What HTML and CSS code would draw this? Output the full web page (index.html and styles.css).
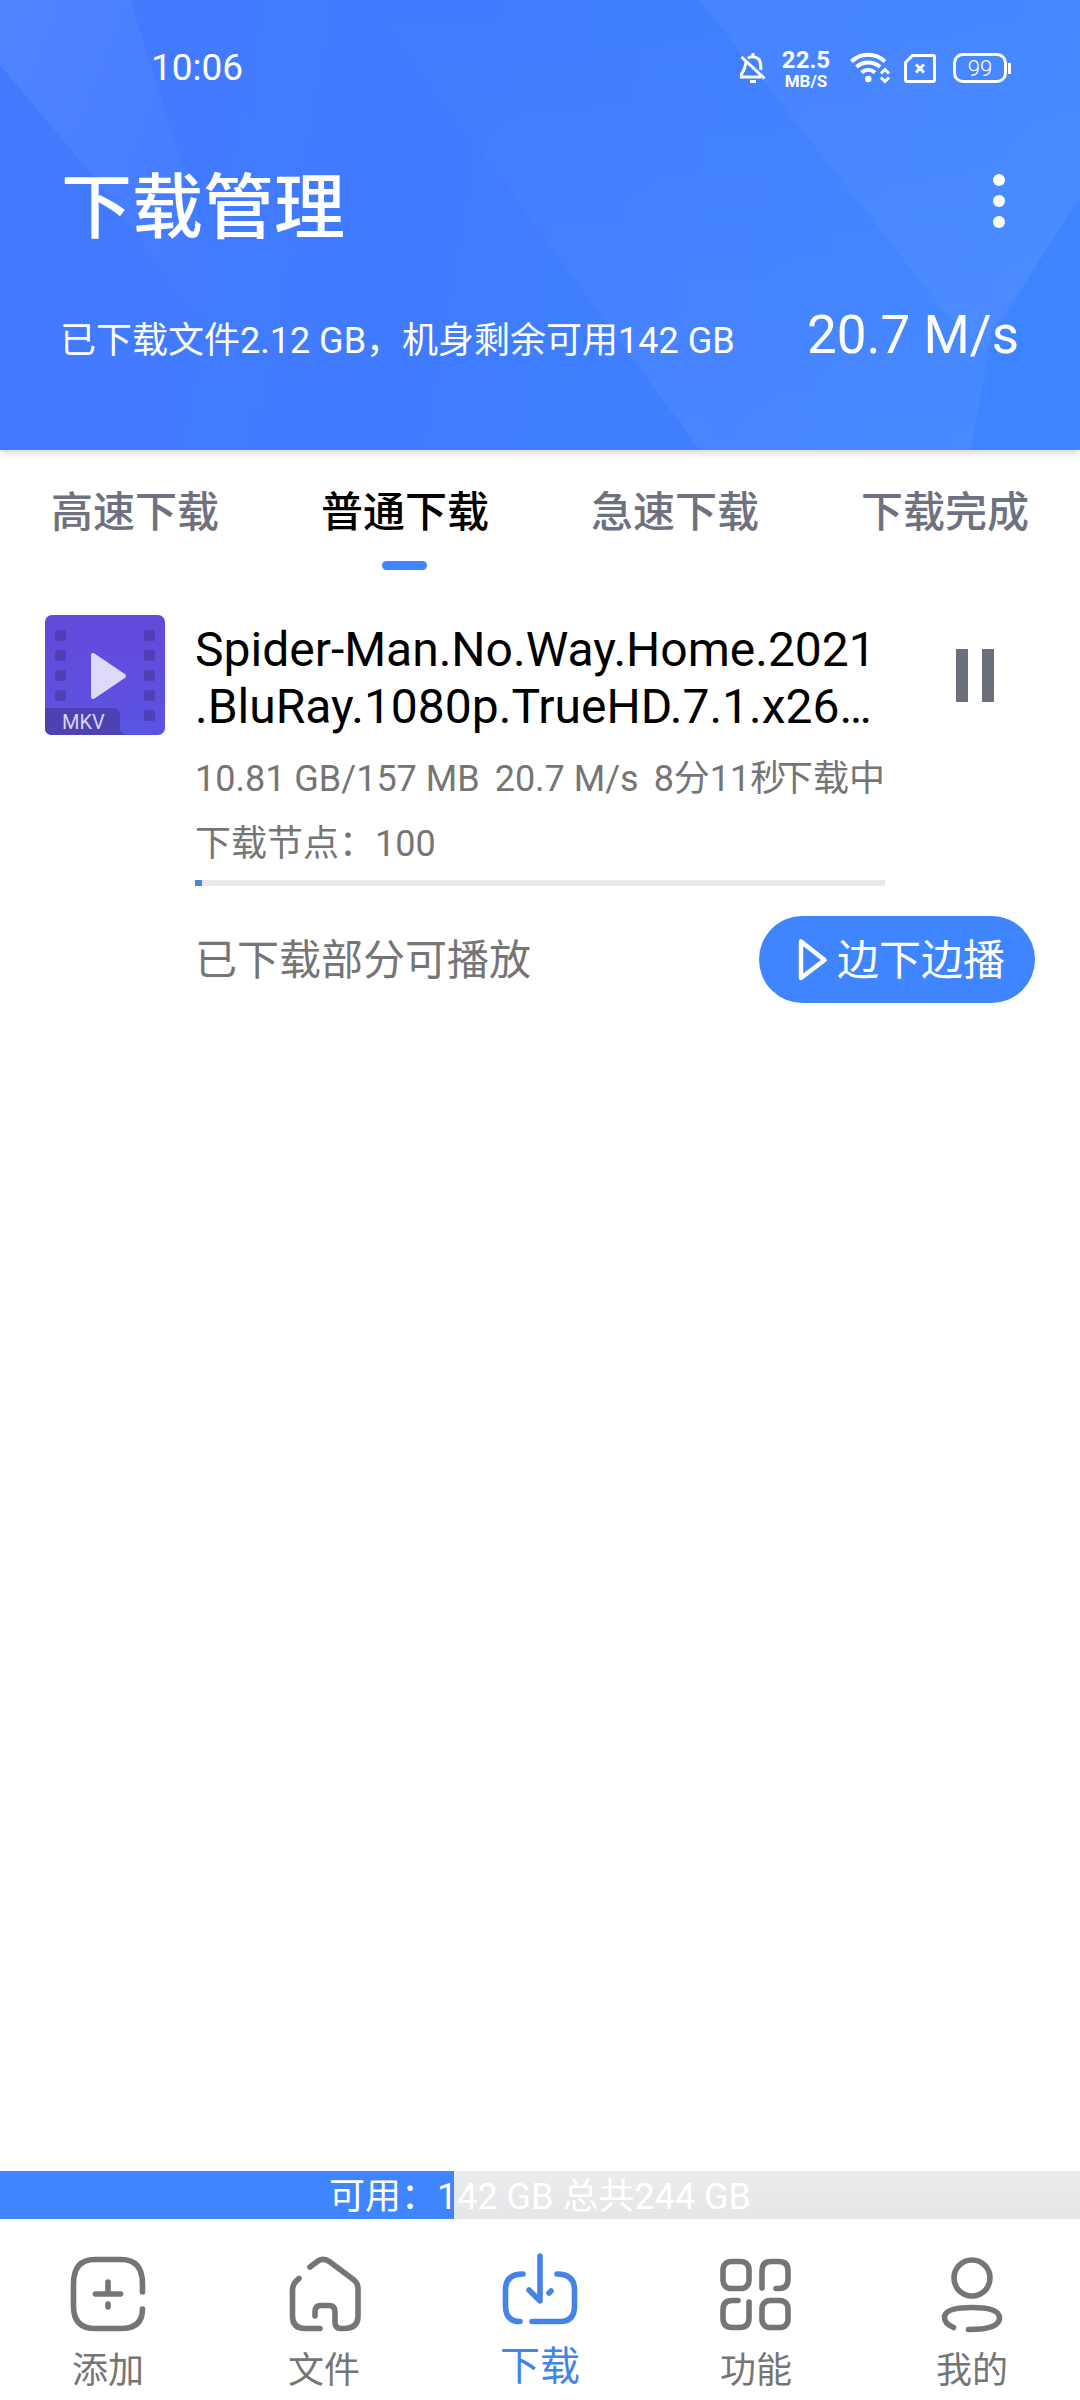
FILE: index.html
```
<!DOCTYPE html>
<html lang="zh-CN">
  <head>
    <meta charset="utf-8" />
    <title>下载管理</title>
    <link rel="stylesheet" href="styles.css">
  </head>

  <body>
    <header class="header">
      <svg class="header-bg" viewBox="0 0 1080 450" preserveAspectRatio="none">
        <defs>
          <linearGradient id="fade-right" x1="0" y1="0" x2="1" y2="0.6">
            <stop offset="0" stop-color="#fff" stop-opacity=".08" />
            <stop offset="1" stop-color="#fff" stop-opacity="0" />
          </linearGradient>
          <linearGradient id="fade-up" x1="0" y1="1" x2="0" y2="0">
            <stop offset="0" stop-color="#fff" stop-opacity=".05" />
            <stop offset="1" stop-color="#fff" stop-opacity="0" />
          </linearGradient>
        </defs>
        <path d="M0 0H130L250 380L84 165L0 65Z" fill="url(#fade-right)" />
        <path d="M370 0L700 450H971L992 330L1080 200V0Z" fill="url(#fade-up)" />
        <path d="M700 0L943 310L985 350L1080 195V0Z" fill="#fff" fill-opacity=".04" />
      </svg>

      <div class="statusbar">
        <span class="time">10:06</span>
        <svg class="bell" width="26" height="32" viewBox="0 0 26 32" fill="none" stroke="#fff" stroke-width="3">
          <path d="M8 6.500C10 4 16 4 19 7.500C21 10 20.500 14 21 18M6 10.500C5 14 5.500 17 1.500 22V25H21M1.500 5L24.500 26.500M13 1V4" />
          <path d="M10 29.500H16" />
        </svg>
        <div class="netspeed">
          <b>22.5</b>
          <small>MB/S</small>
        </div>
        <svg class="wifi" width="42" height="32" viewBox="0 0 42 32" fill="none" stroke="#fff" stroke-width="4">
          <path d="M1.500 9.500C11 .5 25 .5 35 9.500M6.500 15C13 9 23.500 9 30 15M11.500 20.500C15.500 17 21 17 25 20.500" />
          <circle cx="18.300" cy="27" r="3.200" fill="#fff" stroke="none" />
          <path d="M31 21.500L35 17.500L39 21.500M31 25.500L35 29.500L39 25.500" stroke-width="3" />
        </svg>
        <svg class="sim" width="32" height="29" viewBox="0 0 32 29" fill="none" stroke="#fff" stroke-width="3">
          <path d="M8.500 1.500H29Q30.500 1.500 30.500 3V26Q30.500 27.500 29 27.500H3Q1.500 27.500 1.500 26V8.500Z" />
          <path d="M12 10.500L20 18.500M20 10.500L12 18.500" />
        </svg>
        <div class="battery">99</div>
      </div>

      <div class="title-row">
        <h1>下载管理</h1>
        <div class="more"><i></i><i></i><i></i></div>
      </div>

      <div class="summary">
        <span>已下载文件2.12 GB，机身剩余可用142 GB</span>
        <span class="speed">20.7 M/s</span>
      </div>
    </header>

    <nav class="tabs">
      <a>高速下载</a>
      <a class="active">普通下载</a>
      <a>急速下载</a>
      <a>下载完成</a>
    </nav>

    <main>
      <div class="task">
        <svg class="thumb" width="120" height="120" viewBox="0 0 120 120">
          <defs>
            <linearGradient id="purple" x1="0" y1="0" x2="0" y2="1">
              <stop offset="0" stop-color="#6549db" />
              <stop offset="1" stop-color="#5a54e2" />
            </linearGradient>
          </defs>
          <rect width="120" height="120" rx="7" fill="url(#purple)" />
          <g fill="#5040b8">
            <rect x="10" y="15" width="11" height="11" rx="2" />
            <rect x="10" y="35" width="11" height="11" rx="2" />
            <rect x="10" y="55" width="11" height="11" rx="2" />
            <rect x="10" y="75" width="11" height="11" rx="2" />
            <rect x="99" y="15" width="11" height="11" rx="2" />
            <rect x="99" y="35" width="11" height="11" rx="2" />
            <rect x="99" y="55" width="11" height="11" rx="2" />
            <rect x="99" y="75" width="11" height="11" rx="2" />
            <rect x="99" y="95" width="11" height="11" rx="2" />
          </g>
          <path d="M0 93H67Q75 93 75 101V113Q75 120 82 120H7Q0 120 0 113Z" fill="#4c42b2" />
          <path d="M48 40V82L79 61Z" fill="#dedafa" stroke="#dedafa" stroke-width="4" stroke-linejoin="round" />
          <text x="17" y="114" class="thumb-type">MKV</text>
        </svg>

        <div class="info">
          <div class="name">Spider-Man.No.Way.Home.2021<br />.BluRay.1080p.TrueHD.7.1.x26…</div>
          <div class="meta">
            <span>10.81 GB/157 MB</span>
            <span class="rate">20.7 M/s</span>
            <span class="left">8分11秒</span>
            <span class="state">下载中</span>
          </div>
          <div class="nodes">下载节点：100</div>
          <div class="progress"><div style="width: 1%"></div></div>
        </div>

        <div class="pause"><i></i><i></i></div>
      </div>

      <div class="play-row">
        <span>已下载部分可播放</span>
        <a class="play">
          <svg width="30" height="44" viewBox="0 0 30 44" fill="none" stroke="#fff" stroke-width="4.500" stroke-linejoin="round">
            <path d="M3 3.500V40L26.500 22Z" />
          </svg>
          <span>边下边播</span>
        </a>
      </div>
    </main>

    <div class="storage">
      <div class="used" style="width: 42%"></div>
      <span>可用：142 GB 总共244 GB</span>
    </div>

    <nav class="bottom">
      <a>
        <svg width="80" height="80" viewBox="0 0 80 80">
          <path d="M74.500 38V30Q74.500 5.500 53 5.500H27Q5.500 5.500 5.500 30V52Q5.500 74.500 27 74.500H53Q74.500 74.500 74.500 55M40 28V40M27.500 40H52.500M40 50V53" />
        </svg>
        添加
      </a>
      <a>
        <svg width="80" height="80" viewBox="0 0 80 80">
          <path d="M26 13L34 7Q40 3.500 46 8L70 26Q74 29.500 74 34V62Q74 74.500 60 74.500H57Q51 74.500 51 68V58Q51 51.500 45 51.500H37Q31 51.500 31 58V62M15 24.500Q8.500 29.500 8.500 36V62Q8.500 74.500 21 74.500H36" />
        </svg>
        文件
      </a>
      <a class="active">
        <svg width="80" height="80" viewBox="0 0 80 80">
          <path d="M40 6V51L29 40M49 43L51 41M23 24Q5.500 24 5.500 40V56Q5.500 71.500 20 71.500M32 71.500H60Q74.500 71.500 74.500 56V40Q74.500 24 57 24" />
        </svg>
        下载
      </a>
      <a>
        <svg width="80" height="80" viewBox="0 0 80 80">
          <rect x="7" y="7.500" width="26" height="27" rx="8" />
          <rect x="46" y="46.500" width="26" height="27" rx="8" />
          <path d="M46 34V17Q46 7.500 55 7.500H63Q72 7.500 72 17V25Q72 34.500 63 34.500H60M22 46.500H16Q7 46.500 7 56V64Q7 73.500 16 73.500H24Q33 73.500 33 64V48" />
        </svg>
        功能
      </a>
      <a>
        <svg width="80" height="80" viewBox="0 0 80 80">
          <circle cx="40" cy="24" r="18" />
          <path d="M21.500 73.500Q12.500 69.500 12.500 63.500C12.500 56 24 53.500 40 53.500C56 53.500 67.500 56 67.500 64C67.500 72 56 75.500 36.500 75.500" />
        </svg>
        我的
      </a>
    </nav>
  </body>
</html>
```

FILE: styles.css
```
* {
  box-sizing: border-box;
}

body {
  margin: 0;
  height: 2400px;
  display: flex;
  flex-direction: column;
  background: #fff;
  color: #757575;
  font-family: Roboto, "Noto Sans CJK SC", sans-serif;
  font-size: 36px;
  line-height: 42px;
  white-space: nowrap;
}

/* header */

.header {
  position: relative;
  flex: none;
  height: 450px;
  background: linear-gradient(100deg, #427aff 0%, #407bff 40%, #3e85ff 100%);
  box-shadow: 0 2px 8px rgba(0, 0, 0, 0.2);
  color: #fff;
}

.header-bg {
  position: absolute;
  left: 0;
  top: 0;
  width: 100%;
  height: 100%;
}

.header > div {
  position: relative;
}

.statusbar {
  display: flex;
  align-items: center;
  height: 136px;
  padding: 0 69px 0 151px;
}

.time {
  margin-right: auto;
  font-size: 37px;
}

.netspeed {
  display: flex;
  flex-direction: column;
  align-items: center;
  width: 50px;
  margin: 2px 19px 0 15px;
}

.netspeed b {
  font-size: 24px;
  line-height: 24px;
  font-weight: 700;
}

.netspeed small {
  font-size: 17px;
  line-height: 18px;
  font-weight: 700;
}

.sim {
  margin: 0 17px 0 12px;
}

.battery {
  position: relative;
  width: 54px;
  height: 30px;
  margin-right: 4px;
  border: 3px solid #fff;
  border-radius: 10px;
  font-size: 22px;
  font-weight: 300;
  line-height: 25px;
  text-align: center;
}

.battery::after {
  content: "";
  position: absolute;
  right: -7px;
  top: 7px;
  width: 3px;
  height: 11px;
  background: #fff;
}

.title-row {
  display: flex;
  justify-content: space-between;
  height: 130px;
  padding: 0 75px 0 61px;
}

h1 {
  margin: 20px 0 0;
  font-size: 71px;
  line-height: 104px;
  font-weight: 500;
}

.more {
  display: flex;
  flex-direction: column;
  gap: 9px;
  margin-top: 38px;
}

.more i {
  width: 12px;
  height: 12px;
  border-radius: 50%;
  background: #fff;
}

.summary {
  display: flex;
  justify-content: space-between;
  align-items: baseline;
  padding: 37px 61px 0 60px;
}

.speed {
  font-size: 53px;
  line-height: 64px;
}

/* tabs */

.tabs {
  display: flex;
  flex: none;
  height: 165px;
}

.tabs a {
  flex: 1;
  padding-top: 32px;
  color: #6e7180;
  font-size: 42px;
  line-height: 62px;
  font-weight: 500;
  text-align: center;
}

.tabs .active {
  color: #000;
}

.tabs .active::after {
  content: "";
  display: block;
  width: 45px;
  height: 9px;
  margin: 17px 0 0 112px;
  border-radius: 5px;
  background: #3f85ff;
}

/* download task */

main {
  flex: 1;
}

.task {
  display: flex;
  padding: 0 86px 0 45px;
}

.thumb {
  flex: none;
  margin-right: 30px;
}

.thumb-type {
  fill: #d8d4fa;
  font-size: 20px;
}

.info {
  width: 690px;
}

.name {
  margin-top: 6px;
  color: #000;
  font-size: 48px;
  line-height: 57px;
}

.meta {
  display: flex;
  margin-top: 23px;
}

.rate {
  margin-left: 15px;
}

/* a long time estimate runs under the state label */
.left {
  margin: 0 -14px 0 15px;
}

.state {
  margin-left: auto;
}

.nodes {
  margin-top: 23px;
}

.progress {
  height: 6px;
  margin-top: 15px;
  background: #e9e9e9;
}

.progress div {
  height: 100%;
  background: #4a86dc;
}

.pause {
  display: flex;
  justify-content: space-between;
  width: 38px;
  height: 53px;
  margin: 34px 0 0 auto;
}

.pause i {
  width: 12px;
  background: #6c707c;
}

.play-row {
  display: flex;
  justify-content: space-between;
  align-items: center;
  margin-top: 30px;
  padding: 0 45px 0 195px;
  font-size: 42px;
}

.play-row span {
  padding-top: 3px;
}

.play {
  display: flex;
  align-items: center;
  gap: 9px;
  width: 276px;
  height: 87px;
  padding-left: 39px;
  border-radius: 44px;
  background: #3f85ff;
  color: #fff;
}

/* storage bar */

.storage {
  position: relative;
  height: 48px;
  background: linear-gradient(#ebeced, #e5e6e8);
  color: #fff;
  line-height: 52px;
  text-align: center;
}

.used {
  position: absolute;
  left: 0;
  top: 0;
  height: 100%;
  background: #3f85ff;
}

.storage span {
  position: relative;
}

/* bottom navigation */

.bottom {
  display: flex;
  flex: none;
  height: 181px;
}

.bottom a {
  display: flex;
  flex: 1;
  flex-direction: column;
  align-items: center;
  padding-top: 35px;
  line-height: 74px;
}

.bottom svg {
  flex: none;
  fill: none;
  stroke: #757575;
  stroke-width: 5.6;
  stroke-linecap: round;
  stroke-linejoin: round;
}

.bottom .active {
  padding-top: 31px;
  color: #4484e8;
  font-size: 40px;
}

.bottom .active svg {
  stroke: #4484e8;
}
```
